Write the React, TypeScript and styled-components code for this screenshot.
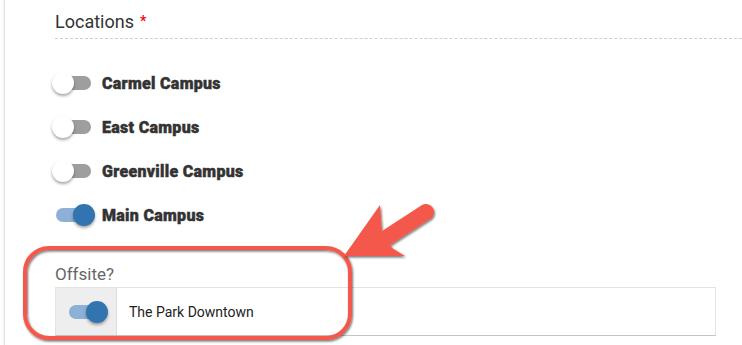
import styled, { createGlobalStyle } from "styled-components";

const GlobalStyle = createGlobalStyle`
  html, body {
    margin: 0;
    padding: 0;
    background: #fff;
  }
  body {
    font-family: Roboto, "Liberation Sans", sans-serif;
    color: #333;
  }
`;

const Page = styled.div`
  position: relative;
  width: 742px;
  height: 345px;
  overflow: hidden;
  padding-left: 4px;
  box-sizing: border-box;
`;

const Panel = styled.div`
  height: 100%;
  border-left: 1px solid #e4e4e4;
  box-shadow: -1px 0 2px rgba(0, 0, 0, 0.06);
  padding: 0 26px 0 50px;
  box-sizing: border-box;
`;

const Title = styled.div`
  padding-top: 10px;
  padding-bottom: 5px;
  font-size: 18px;
  line-height: 22px;
  color: #333;
  border-bottom: 1px dashed #cfcfcf;
  margin-right: -26px;
`;

const Required = styled.span`
  color: #e81010;
  font-size: 14px;
  font-weight: 700;
  margin-left: 6px;
  vertical-align: 2px;
`;

const List = styled.div`
  margin-top: 22px;
  display: flex;
  flex-direction: column;
`;

const Row = styled.div`
  height: 44px;
  display: flex;
  align-items: center;
  gap: 7px;
  margin-left: -3px;
`;

const RowLabel = styled.span`
  font-size: 16px;
  font-weight: 900;
  color: #333;
  letter-spacing: 0.3px;
  -webkit-text-stroke: 0.45px #333;
`;

const Switch = styled.span`
  position: relative;
  display: inline-block;
  width: 43px;
  height: 22px;
  flex: none;
`;

const Track = styled.span<{ $on: boolean }>`
  position: absolute;
  left: 4px;
  top: 4px;
  width: 35px;
  height: 14px;
  border-radius: 7px;
  background: ${(p) => (p.$on ? "#8db0d6" : "#9e9e9e")};
`;

const Knob = styled.span<{ $on: boolean }>`
  position: absolute;
  top: 0;
  left: ${(p) => (p.$on ? "21px" : "0")};
  width: 22px;
  height: 22px;
  border-radius: 50%;
  background: ${(p) => (p.$on ? "#3174b0" : "#fff")};
  box-shadow: 0 2px 3px rgba(0, 0, 0, 0.35);
`;

const FieldLabel = styled.div`
  margin-top: 27px;
  font-size: 17px;
  line-height: 20px;
  color: #666;
`;

const Field = styled.div`
  margin-top: 3px;
  height: 49px;
  display: flex;
  border: 1px solid #e3e3e3;
  border-bottom-color: #c4c4c4;
  box-sizing: border-box;
`;

const Addon = styled.div`
  width: 60px;
  background: #eeeeee;
  border-right: 1px solid #dcdcdc;
  display: flex;
  align-items: center;
  justify-content: center;
`;

const FieldText = styled.div`
  display: flex;
  align-items: center;
  padding-left: 12px;
  font-size: 14px;
  color: #222;
`;

const Annotations = styled.svg`
  position: absolute;
  left: 0;
  top: 0;
  pointer-events: none;
`;

function Toggle({ on }: { on: boolean }) {
  return (
    <Switch>
      <Track $on={on} />
      <Knob $on={on} />
    </Switch>
  );
}

const campuses = [
  { name: "Carmel Campus", on: false },
  { name: "East Campus", on: false },
  { name: "Greenville Campus", on: false },
  { name: "Main Campus", on: true },
];

export default function App() {
  return (
    <>
      <GlobalStyle />
      <Page>
        <Panel>
          <Title>
            Locations<Required>*</Required>
          </Title>
          <List>
            {campuses.map((c) => (
              <Row key={c.name}>
                <Toggle on={c.on} />
                <RowLabel>{c.name}</RowLabel>
              </Row>
            ))}
          </List>
          <FieldLabel>Offsite?</FieldLabel>
          <Field>
            <Addon>
              <Toggle on />
            </Addon>
            <FieldText>The Park Downtown</FieldText>
          </Field>
        </Panel>
        <Annotations width="742" height="345" viewBox="0 0 742 345">
          <defs>
            <filter id="shade" x="-20%" y="-20%" width="140%" height="140%">
              <feDropShadow dx="1" dy="1.5" stdDeviation="1.2" floodColor="#000" floodOpacity="0.55" />
            </filter>
          </defs>
          <rect
            x="25"
            y="248"
            width="325"
            height="90"
            rx="24"
            fill="none"
            stroke="#f4594b"
            strokeWidth="4"
            filter="url(#shade)"
          />
          <g filter="url(#shade)" fill="#f4594b">
            <line x1="386" y1="238" x2="426" y2="212" stroke="#f4594b" strokeWidth="16" strokeLinecap="round" />
            <polygon points="344,256 380,205 382,231 392,248 405,256" />
          </g>
        </Annotations>
      </Page>
    </>
  );
}
